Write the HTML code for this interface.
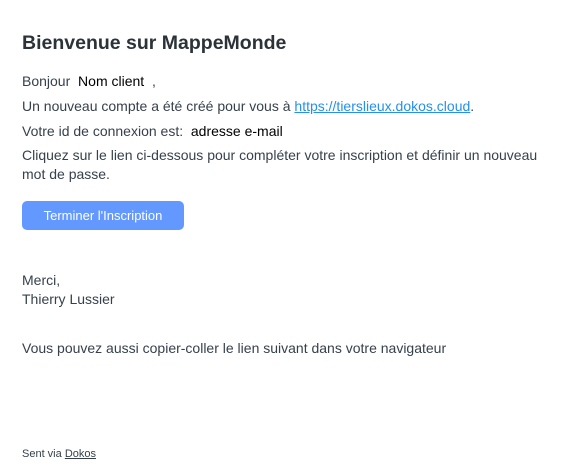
<!DOCTYPE html>
<html><head><meta charset="utf-8"><style>
body{margin:0;width:564px;height:474px;background:#fff;font-family:"Liberation Sans",sans-serif;color:#36414c;position:relative;overflow:hidden}
.a{position:absolute;left:22px;font-size:14px;white-space:nowrap;line-height:19px}
h1{position:absolute;left:22px;top:30px;margin:0;font-size:19.5px;font-weight:bold;color:#2b3238;line-height:26px}
a{color:#2490ef}
.k{color:#000}
.btn{position:absolute;left:22px;top:201px;width:162px;height:29px;border-radius:5px;background:#6298ff;color:#fff;font-size:13px;text-align:center;line-height:29px}
</style></head><body>
<h1>Bienvenue sur MappeMonde</h1>
<div class="a" style="top:72px">Bonjour &nbsp;<span class="k">Nom client</span> &nbsp;,</div>
<div class="a" style="top:97px">Un nouveau compte a été créé pour vous à <a href="#">https://tierslieux.dokos.cloud</a>.</div>
<div class="a" style="top:122px">Votre id de connexion est: &nbsp;<span class="k">adresse e-mail</span></div>
<div class="a" style="top:146px;white-space:normal;width:525px">Cliquez sur le lien ci-dessous pour compléter votre inscription et définir un nouveau mot de passe.</div>
<div class="btn">Terminer l'Inscription</div>
<div class="a" style="top:271px">Merci,<br>Thierry Lussier</div>
<div class="a" style="top:339px">Vous pouvez aussi copier-coller le lien suivant dans votre navigateur</div>
<div class="a" style="top:445px;font-size:11px">Sent via <a href="#" style="color:#36414c">Dokos</a></div>
</body></html>
